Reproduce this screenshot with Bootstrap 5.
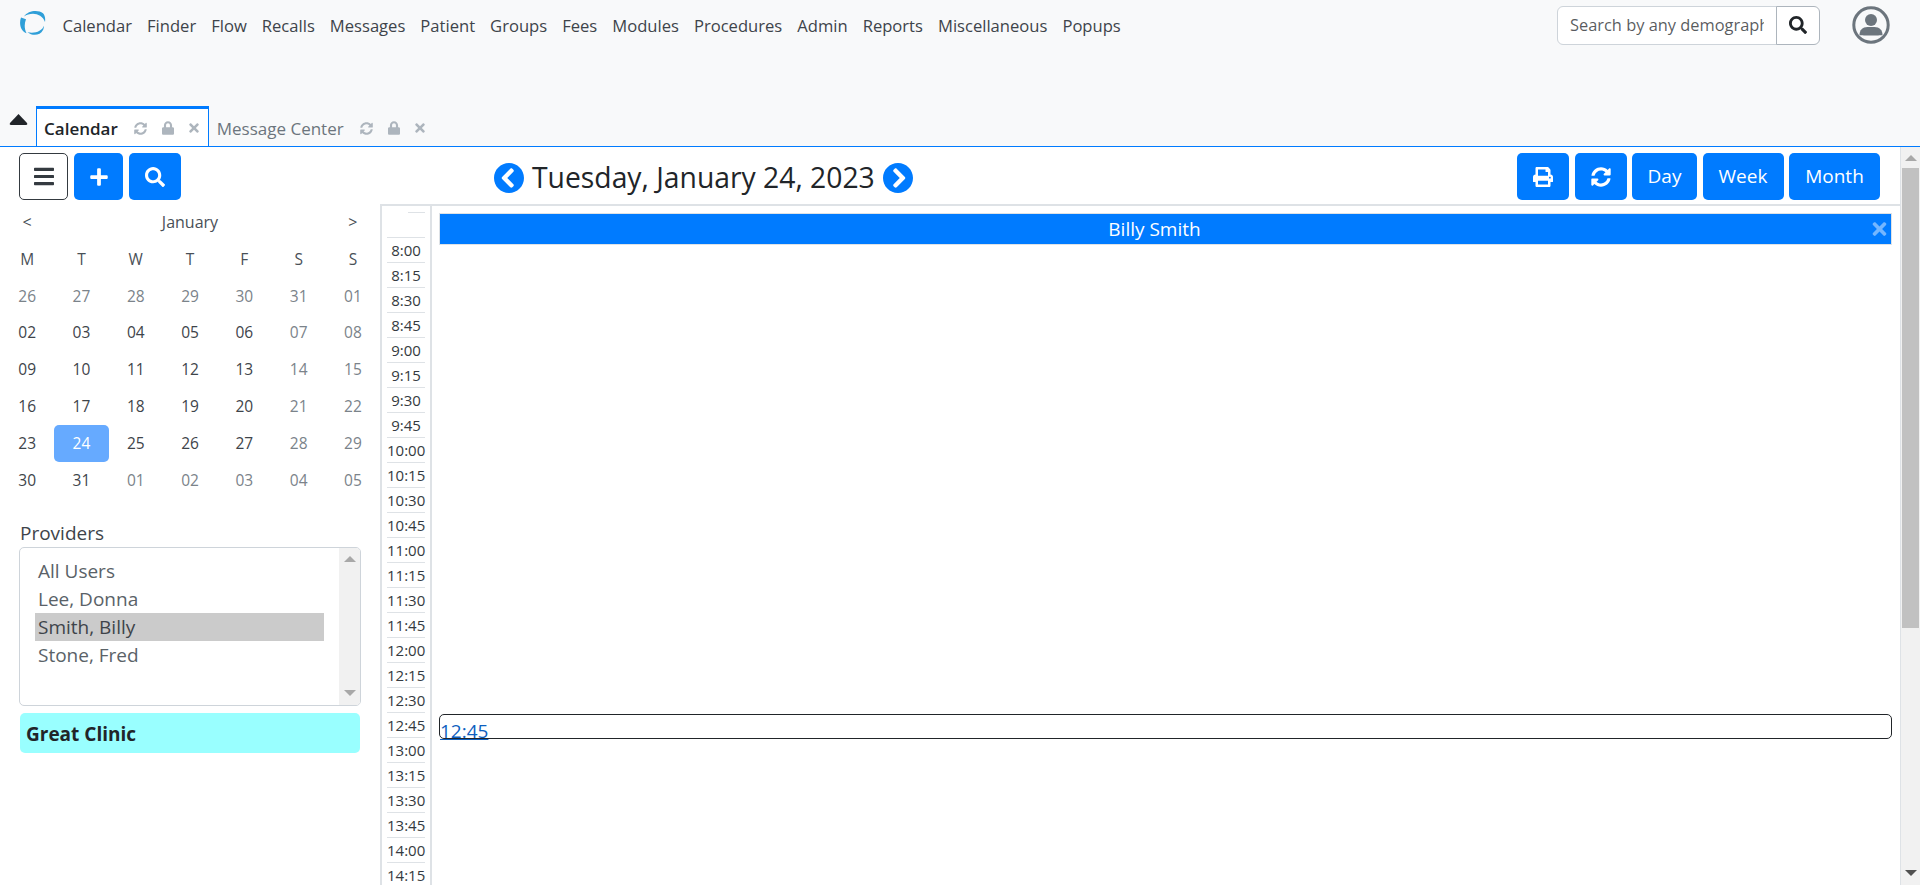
<!DOCTYPE html>
<html lang="en">
  <head>
    <meta charset="UTF-8" />
    <meta name="viewport" content="width=device-width, initial-scale=1.0" />
    <title>Calendar</title>
    <link rel="stylesheet" href="https://cdn.jsdelivr.net/npm/bootstrap@5.3.3/dist/css/bootstrap.min.css" />
    <script src="https://cdn.jsdelivr.net/npm/bootstrap@5.3.3/dist/js/bootstrap.bundle.min.js"></script>
    <style>
      html, body { height: 100%; }
      body { font-family: "Open Sans", "Noto Sans", sans-serif; color: #212529; overflow: hidden; display: flex; flex-direction: column; }
      .ico { fill: currentColor; display: block; }
      .top-area { height: 147px; background: #f8f9fa; border-bottom: 1px solid #007bff; flex: none; display: flex; flex-direction: column; justify-content: space-between; }
      .top-row { height: 48px; padding: 6px 0 0 20px; }
      .brand-logo { width: 26px; height: 26px; margin: 4px 9px 0 0; fill: #2f9fd8; }
      .menu-link { color: #3e444a; font-size: 16.6px; padding: 0 7.5px; line-height: 22px; text-decoration: none; margin-top: 9px; }
      .search-box { width: 263px; height: 38px; margin-left: auto; margin-right: 32px; }
      .search-box .form-control { font-size: 16.4px; padding-left: 12px; border-color: #ced4da; }
      .search-box .btn { border-color: #adb5bd; color: #212529; padding: 0 12px; background: #fff; }
      .avatar { width: 38px; height: 38px; margin: 0 30px 0 0; color: #6c757d; }
      .tab-row { height: 40px; padding-left: 9px; }
      .tab-arrow { width: 19px; height: 13px; margin: 7px 8px 0 0; color: #212529; }
      .tab-item { height: 40px; padding: 7px 9px 0 7px; display: flex; gap: 16px; align-items: flex-start; font-size: 17px; color: #6c757d; border: 1px solid transparent; border-top-width: 3px; border-bottom: 0; }
      .tab-on { background: #fff; border-color: #007bff; color: #212529; font-weight: 600; }
      .tab-tools { display: flex; align-items: center; gap: 15px; height: 24px; color: #adb5bd; font-weight: 400; }
      .page-main { flex: 1; min-height: 0; }
      .page-scroll { flex: 1; min-width: 0; overflow: hidden; }
      .fake-bar { width: 20px; flex: none; background: #f1f1f1; border-left: 1px solid #dee2e6; display: flex; flex-direction: column; align-items: center; justify-content: space-between; position: relative; }
      .bar-thumb { width: 17px; height: 460px; background: #c1c1c1; position: absolute; top: 21px; left: 1px; }
      .arrow-up { border: 6px solid transparent; border-top: 0; border-bottom: 6px solid #a8a8a8; margin-top: 8px; }
      .arrow-down { border: 6px solid transparent; border-bottom: 0; border-top: 6px solid #505050; margin-bottom: 9px; }
      .tool-row { height: 57px; padding: 6px 20px 0 19px; }
      .tool-left { width: 475px; gap: 6px; }
      .tool-right { gap: 5.5px; }
      .btn-blue { background: #007bff; border: 0; color: #fff; height: 47px; border-radius: 5px; font-size: 19px; padding: 0; display: flex; align-items: center; justify-content: center; }
      .btn-blue:hover { background: #006fe6; color: #fff; }
      .btn-w49 { width: 49px; }
      .btn-w52 { width: 52px; }
      .btn-w65 { width: 65px; }
      .btn-w81 { width: 81px; }
      .btn-w91 { width: 91px; }
      .btn-burger { width: 49px; height: 47px; border: 1px solid #343a40; border-radius: 5px; background: #fff; color: #343a40; padding: 0; display: flex; align-items: center; justify-content: center; }
      .date-title { font-size: 28.3px; line-height: 40px; font-weight: 400; margin: 0; padding-bottom: 2px; }
      .round-arrow { color: #007bff; }
      .side-col { width: 380px; flex: none; padding: 0 19px 0 0; }
      .mini-head { display: flex; justify-content: space-between; font-size: 16px; line-height: 22px; padding: 7px 0 0 0; color: #495057; width: 380px; }
      .mini-cell { width: 54.3px; text-align: center; }
      .mini-grid { display: grid; grid-template-columns: repeat(7, 54.3px); grid-auto-rows: 36.8px; font-size: 15.5px; margin-top: 8px; }
      .mini-grid > div { display: flex; align-items: center; justify-content: center; color: #3e444a; }
      .mini-grid > .mini-off { color: #7b838a; }
      .mini-grid > .mini-name { color: #495057; }
      .mini-grid > .mini-today { background: #66aaff; color: #fff; border-radius: 5px; }
      .prov-label { margin: 22px 0 0 20px; font-size: 19px; line-height: 24px; color: #3e444a; }
      .prov-box { margin-left: 19px; height: 159px; border: 1px solid #ced4da; border-radius: 5px; overflow: hidden; padding: 9px 36px 0 15px; position: relative; font-size: 19px; color: #5a6268; margin-top: 2px; }
      .prov-opt { height: 28.2px; line-height: 28.2px; padding-left: 3px; }
      .prov-sel { background: #cbcbcb; color: #3e444a; }
      .prov-bar { position: absolute; right: 0; top: 0; bottom: 0; width: 21px; background: #f1f1f1; display: flex; flex-direction: column; justify-content: space-between; align-items: center; }
      .prov-bar .arrow-down { border-top-color: #a8a8a8; }
      .clinic-box { margin: 7px 0 0 20px; height: 40px; width: 340px; background: #99ffff; border-radius: 5px; font-weight: 700; font-size: 19px; line-height: 42px; padding-left: 6px; }
      .sched-wrap { flex: 1; min-width: 0; border-top: 2px solid #dee2e6; border-left: 2px solid #dee2e6; height: 700px; }
      .time-col { width: 50px; flex: none; border-right: 2px solid #dee2e6; padding: 6px 5px 0 5px; }
      .time-slot { height: 25px; border-top: 1px solid #dee2e6; text-align: center; font-size: 15px; line-height: 24px; color: #343a40; }
      .time-blank { height: 25px; border-top: 1px solid #dee2e6; margin-left: 21px; }
      .day-col { flex: 1; min-width: 0; padding: 7px 8px 0 7px; position: relative; }
      .prov-head { height: 32px; background: #007bff; border: 1px solid #dee2e6; color: #fff; font-size: 19px; line-height: 30px; text-align: center; position: relative; padding-right: 22px; }
      .head-close { position: absolute; right: 4px; top: 5px; color: rgba(255,255,255,.45); }
      .slot-now { position: absolute; left: 7px; right: 8px; top: 508px; height: 25px; border: 1px solid #212529; border-radius: 5px; font-size: 19px; line-height: 33px; }
      .slot-now a { color: #0d5fc0; display: block; height: 23px; width: 48px; }
    </style>
  </head>

  <body>
    <header class="top-area">
      <div class="top-row d-flex align-items-start">
        <svg class="brand-logo" viewBox="0 0 26 24" preserveAspectRatio="none">
          <path d="M4 6C8 .5 18-.5 23 3c2 2 2.500 5 2 8-2-5-7-7.500-12-7.500-3.500 0-6.500 1-9 2.500z" />
          <path d="M1 7C-1 12 0 19 6.500 21.500 4.500 18 4 13 6 8.500z" />
          <path d="M7.500 20.500C12 24 20 24 23 18.500c.5-1 1-2.500 1-4-2 5-9 7.500-16.500 6z" />
        </svg>
        <a class="menu-link" href="#">Calendar</a>
        <a class="menu-link" href="#">Finder</a>
        <a class="menu-link" href="#">Flow</a>
        <a class="menu-link" href="#">Recalls</a>
        <a class="menu-link" href="#">Messages</a>
        <a class="menu-link" href="#">Patient</a>
        <a class="menu-link" href="#">Groups</a>
        <a class="menu-link" href="#">Fees</a>
        <a class="menu-link" href="#">Modules</a>
        <a class="menu-link" href="#">Procedures</a>
        <a class="menu-link" href="#">Admin</a>
        <a class="menu-link" href="#">Reports</a>
        <a class="menu-link" href="#">Miscellaneous</a>
        <a class="menu-link" href="#">Popups</a>
        <div class="input-group search-box">
          <input type="text" class="form-control" placeholder="Search by any demographics" aria-label="Search" />
          <button class="btn" type="button">
            <svg class="ico" width="18" height="18" viewBox="0 0 512 512"><path d="M505 442.700L405.300 343c-4.500-4.500-10.600-7-17-7H372c27.600-35.300 44-79.700 44-128C416 93.100 322.900 0 208 0S0 93.100 0 208s93.100 208 208 208c48.300 0 92.700-16.400 128-44v16.300c0 6.400 2.500 12.500 7 17l99.700 99.700c9.400 9.400 24.600 9.400 33.900 0l28.300-28.300c9.400-9.400 9.400-24.600.1-34zM208 336c-70.700 0-128-57.200-128-128 0-70.700 57.200-128 128-128 70.700 0 128 57.200 128 128 0 70.700-57.200 128-128 128z"/></svg>
          </button>
        </div>
        <svg class="avatar" viewBox="0 0 38 38">
          <circle cx="19" cy="19" r="17.200" fill="none" stroke="currentColor" stroke-width="3" />
          <circle cx="19" cy="14" r="6" fill="currentColor" />
          <path d="M7.500 29c0-5 3-8 8-8h7c5 0 8 3 8 8-3 .8-20 .8-23 0z" fill="currentColor" />
        </svg>
      </div>
      <div class="tab-row d-flex align-items-start">
        <svg class="tab-arrow" viewBox="0 0 19 13"><path d="M9.500 1L18 10c.6 1 .2 2-1 2H2c-1.200 0-1.600-1-1-2z" fill="currentColor" /></svg>
        <div class="tab-item tab-on">
          <span>Calendar</span>
          <span class="tab-tools">
            <svg class="ico" width="13" height="13" viewBox="0 0 512 512"><path d="M370.720 133.280C339.458 104.008 298.888 87.962 255.848 88c-77.458.068-144.328 53.178-162.791 126.850-1.344 5.363-6.122 9.150-11.651 9.150H24.103c-7.498 0-13.194-6.807-11.807-14.176C33.933 94.924 134.813 8 256 8c66.448 0 126.791 26.136 171.315 68.685L463.030 40.970C478.149 25.851 504 36.559 504 57.941V192c0 13.255-10.745 24-24 24H345.941c-21.382 0-32.090-25.851-16.971-40.971l41.750-41.749zM32 296h134.059c21.382 0 32.090 25.851 16.971 40.971l-41.750 41.750c31.262 29.273 71.835 45.319 114.876 45.280 77.418-.07 144.315-53.144 162.787-126.849 1.344-5.363 6.122-9.150 11.651-9.150h57.304c7.498 0 13.194 6.807 11.807 14.176C478.067 417.076 377.187 504 256 504c-66.448 0-126.791-26.136-171.315-68.685L48.970 471.030C33.851 486.149 8 475.441 8 454.059V320c0-13.255 10.745-24 24-24z"/></svg>
            <svg class="ico" width="12" height="14" viewBox="0 0 448 512"><path d="M400 224h-24v-72C376 68.200 307.800 0 224 0S72 68.200 72 152v72H48c-26.500 0-48 21.500-48 48v192c0 26.500 21.500 48 48 48h352c26.500 0 48-21.500 48-48V272c0-26.500-21.500-48-48-48zm-104 0H152v-72c0-39.700 32.300-72 72-72s72 32.300 72 72v72z"/></svg>
            <svg class="ico" width="10" height="14" viewBox="0 0 352 512"><path d="M242.720 256l100.070-100.070c12.280-12.280 12.280-32.190 0-44.480l-22.240-22.240c-12.280-12.280-32.190-12.280-44.480 0L176 189.280 75.930 89.210c-12.280-12.280-32.190-12.280-44.480 0L9.210 111.450c-12.280 12.280-12.280 32.190 0 44.480L109.280 256 9.210 356.070c-12.280 12.280-12.280 32.190 0 44.480l22.240 22.240c12.280 12.280 32.200 12.280 44.480 0L176 322.720l100.070 100.070c12.280 12.280 32.200 12.280 44.480 0l22.240-22.240c12.280-12.280 12.280-32.190 0-44.480L242.720 256z"/></svg>
          </span>
        </div>
        <div class="tab-item">
          <span>Message Center</span>
          <span class="tab-tools">
            <svg class="ico" width="13" height="13" viewBox="0 0 512 512"><path d="M370.720 133.280C339.458 104.008 298.888 87.962 255.848 88c-77.458.068-144.328 53.178-162.791 126.850-1.344 5.363-6.122 9.150-11.651 9.150H24.103c-7.498 0-13.194-6.807-11.807-14.176C33.933 94.924 134.813 8 256 8c66.448 0 126.791 26.136 171.315 68.685L463.030 40.970C478.149 25.851 504 36.559 504 57.941V192c0 13.255-10.745 24-24 24H345.941c-21.382 0-32.090-25.851-16.971-40.971l41.750-41.749zM32 296h134.059c21.382 0 32.090 25.851 16.971 40.971l-41.750 41.750c31.262 29.273 71.835 45.319 114.876 45.280 77.418-.07 144.315-53.144 162.787-126.849 1.344-5.363 6.122-9.150 11.651-9.150h57.304c7.498 0 13.194 6.807 11.807 14.176C478.067 417.076 377.187 504 256 504c-66.448 0-126.791-26.136-171.315-68.685L48.970 471.030C33.851 486.149 8 475.441 8 454.059V320c0-13.255 10.745-24 24-24z"/></svg>
            <svg class="ico" width="12" height="14" viewBox="0 0 448 512"><path d="M400 224h-24v-72C376 68.200 307.800 0 224 0S72 68.200 72 152v72H48c-26.500 0-48 21.500-48 48v192c0 26.500 21.500 48 48 48h352c26.500 0 48-21.500 48-48V272c0-26.500-21.500-48-48-48zm-104 0H152v-72c0-39.700 32.300-72 72-72s72 32.300 72 72v72z"/></svg>
            <svg class="ico" width="10" height="14" viewBox="0 0 352 512"><path d="M242.720 256l100.070-100.070c12.280-12.280 12.280-32.190 0-44.480l-22.240-22.240c-12.280-12.280-32.190-12.280-44.480 0L176 189.280 75.930 89.210c-12.280-12.280-32.190-12.280-44.480 0L9.210 111.450c-12.280 12.280-12.280 32.190 0 44.480L109.280 256 9.210 356.070c-12.280 12.280-12.280 32.190 0 44.480l22.240 22.240c12.280 12.280 32.200 12.280 44.480 0L176 322.720l100.070 100.070c12.280 12.280 32.200 12.280 44.480 0l22.240-22.240c12.280-12.280 12.280-32.190 0-44.480L242.720 256z"/></svg>
          </span>
        </div>
      </div>
    </header>

    <main class="page-main d-flex">
      <div class="page-scroll">
        <div class="tool-row d-flex align-items-start">
          <div class="tool-left d-flex">
            <button class="btn-burger" type="button">
              <svg class="ico" width="20" height="23" viewBox="0 0 448 512"><path d="M16 132h416c8.837 0 16-7.163 16-16V76c0-8.837-7.163-16-16-16H16C7.163 60 0 67.163 0 76v40c0 8.837 7.163 16 16 16zm0 160h416c8.837 0 16-7.163 16-16v-40c0-8.837-7.163-16-16-16H16c-8.837 0-16 7.163-16 16v40c0 8.837 7.163 16 16 16zm0 160h416c8.837 0 16-7.163 16-16v-40c0-8.837-7.163-16-16-16H16c-8.837 0-16 7.163-16 16v40c0 8.837 7.163 16 16 16z"/></svg>
            </button>
            <button class="btn-blue btn-w49" type="button">
              <svg class="ico" width="18" height="20" viewBox="0 0 448 512"><path d="M416 208H272V64c0-17.670-14.330-32-32-32h-32c-17.670 0-32 14.330-32 32v144H32c-17.670 0-32 14.330-32 32v32c0 17.670 14.330 32 32 32h144v144c0 17.670 14.330 32 32 32h32c17.670 0 32-14.330 32-32V304h144c17.670 0 32-14.330 32-32v-32c0-17.670-14.330-32-32-32z"/></svg>
            </button>
            <button class="btn-blue btn-w52" type="button">
              <svg class="ico" width="20" height="20" viewBox="0 0 512 512"><path d="M505 442.700L405.300 343c-4.500-4.500-10.600-7-17-7H372c27.600-35.300 44-79.700 44-128C416 93.100 322.900 0 208 0S0 93.100 0 208s93.100 208 208 208c48.300 0 92.700-16.400 128-44v16.300c0 6.400 2.500 12.500 7 17l99.700 99.700c9.400 9.400 24.600 9.400 33.900 0l28.300-28.300c9.400-9.400 9.400-24.600.1-34zM208 336c-70.700 0-128-57.200-128-128 0-70.700 57.200-128 128-128 70.700 0 128 57.200 128 128 0 70.700-57.200 128-128 128z"/></svg>
            </button>
          </div>
          <div class="d-flex align-items-center gap-2 mt-1">
            <svg class="ico round-arrow" width="30" height="30" viewBox="8 8 496 496"><path d="M256 504C119 504 8 393 8 256S119 8 256 8s248 111 248 248-111 248-248 248zM142.100 273l135.500 135.500c9.400 9.400 24.600 9.400 33.900 0l17-17c9.400-9.400 9.400-24.600 0-33.900L226.900 256l101.600-101.600c9.400-9.400 9.400-24.600 0-33.900l-17-17c-9.400-9.400-24.600-9.400-33.900 0L142.100 239c-9.400 9.400-9.400 24.600 0 34z"/></svg>
            <h1 class="date-title">Tuesday, January 24, 2023</h1>
            <svg class="ico round-arrow" width="30" height="30" viewBox="8 8 496 496"><path d="M256 8c137 0 248 111 248 248S393 504 256 504 8 393 8 256 119 8 256 8zm113.900 231L234.400 103.500c-9.400-9.400-24.600-9.400-33.900 0l-17 17c-9.400 9.400-9.400 24.600 0 33.900L285.100 256 183.500 357.600c-9.400 9.400-9.400 24.600 0 33.900l17 17c9.400 9.400 24.600 9.400 33.900 0L369.900 273c9.400-9.400 9.400-24.600 0-34z"/></svg>
          </div>
          <div class="tool-right d-flex ms-auto">
            <button class="btn-blue btn-w52" type="button">
              <svg class="ico" width="20" height="20" viewBox="0 0 512 512"><path d="M448 192V77.250c0-8.490-3.370-16.620-9.370-22.630L393.370 9.370c-6-6-14.140-9.370-22.630-9.370H96C78.330 0 64 14.330 64 32v160c-35.350 0-64 28.650-64 64v112c0 8.840 7.160 16 16 16h48v96c0 17.670 14.330 32 32 32h320c17.670 0 32-14.330 32-32v-96h48c8.840 0 16-7.160 16-16V256c0-35.350-28.650-64-64-64zm-64 256H128v-96h256v96zm0-224H128V64h192v48c0 8.840 7.160 16 16 16h48v96zm48 72c-13.250 0-24-10.750-24-24 0-13.260 10.750-24 24-24s24 10.740 24 24c0 13.250-10.750 24-24 24z"/></svg>
            </button>
            <button class="btn-blue btn-w52" type="button">
              <svg class="ico" width="20" height="20" viewBox="0 0 512 512"><path d="M370.720 133.280C339.458 104.008 298.888 87.962 255.848 88c-77.458.068-144.328 53.178-162.791 126.850-1.344 5.363-6.122 9.150-11.651 9.150H24.103c-7.498 0-13.194-6.807-11.807-14.176C33.933 94.924 134.813 8 256 8c66.448 0 126.791 26.136 171.315 68.685L463.030 40.970C478.149 25.851 504 36.559 504 57.941V192c0 13.255-10.745 24-24 24H345.941c-21.382 0-32.090-25.851-16.971-40.971l41.750-41.749zM32 296h134.059c21.382 0 32.090 25.851 16.971 40.971l-41.750 41.750c31.262 29.273 71.835 45.319 114.876 45.280 77.418-.07 144.315-53.144 162.787-126.849 1.344-5.363 6.122-9.150 11.651-9.150h57.304c7.498 0 13.194 6.807 11.807 14.176C478.067 417.076 377.187 504 256 504c-66.448 0-126.791-26.136-171.315-68.685L48.970 471.030C33.851 486.149 8 475.441 8 454.059V320c0-13.255 10.745-24 24-24z"/></svg>
            </button>
            <button class="btn-blue btn-w65" type="button">Day</button>
            <button class="btn-blue btn-w81" type="button">Week</button>
            <button class="btn-blue btn-w91" type="button">Month</button>
          </div>
        </div>
        <div class="d-flex">
          <aside class="side-col">
            <div class="mini-head">
              <span class="mini-cell">&lt;</span><span>January</span><span class="mini-cell">&gt;</span>
            </div>
            <div class="mini-grid" id="miniGrid"></div>
            <div class="prov-label">Providers</div>
            <div class="prov-box">
              <div class="prov-opt">All Users</div>
              <div class="prov-opt">Lee, Donna</div>
              <div class="prov-opt prov-sel">Smith, Billy</div>
              <div class="prov-opt">Stone, Fred</div>
              <div class="prov-bar"><span class="arrow-up"></span><span class="arrow-down"></span></div>
            </div>
            <div class="clinic-box">Great Clinic</div>
          </aside>
          <section class="sched-wrap d-flex">
            <div class="time-col" id="timeCol"><div class="time-blank"></div></div>
            <div class="day-col">
              <div class="prov-head">Billy Smith
                <svg class="ico head-close" width="15" height="20" viewBox="0 0 352 512"><path d="M242.720 256l100.070-100.070c12.280-12.280 12.280-32.190 0-44.480l-22.240-22.240c-12.280-12.280-32.190-12.280-44.480 0L176 189.280 75.930 89.210c-12.280-12.280-32.190-12.280-44.480 0L9.210 111.450c-12.280 12.280-12.280 32.190 0 44.480L109.280 256 9.210 356.070c-12.280 12.280-12.280 32.190 0 44.480l22.240 22.240c12.280 12.280 32.200 12.280 44.480 0L176 322.720l100.070 100.070c12.280 12.280 32.200 12.280 44.480 0l22.240-22.240c12.280-12.280 12.280-32.190 0-44.480L242.720 256z"/></svg>
              </div>
              <div class="slot-now"><a href="#">12:45</a></div>
            </div>
          </section>
        </div>
      </div>
      <div class="fake-bar">
        <span class="arrow-up"></span>
        <span class="bar-thumb"></span>
        <span class="arrow-down"></span>
      </div>
    </main>
    <script>
      // mini calendar cells
      var grid = document.getElementById("miniGrid");
      var names = ["M", "T", "W", "T", "F", "S", "S"];
      var days = ["26","27","28","29","30","31","01","02","03","04","05","06","07","08","09","10","11","12","13","14","15","16","17","18","19","20","21","22","23","24","25","26","27","28","29","30","31","01","02","03","04","05"];
      var html = "";
      names.forEach(function (n) { html += '<div class="mini-name">' + n + "</div>"; });
      days.forEach(function (d, i) {
        var weekend = i % 7 > 4;
        var off = i < 6 || i > 36 || weekend;
        var cls = i == 29 ? "mini-today" : off ? "mini-off" : "";
        html += '<div class="' + cls + '">' + d + "</div>";
      });
      grid.innerHTML = html;

      // time slots, 15 minute steps
      var col = document.getElementById("timeCol");
      var rows = "";
      for (var m = 8 * 60; m <= 14 * 60 + 15; m += 15) {
        var mm = m % 60;
        rows += '<div class="time-slot">' + Math.floor(m / 60) + ":" + (mm < 10 ? "0" + mm : mm) + "</div>";
      }
      col.innerHTML += rows;
    </script>
  </body>
</html>
